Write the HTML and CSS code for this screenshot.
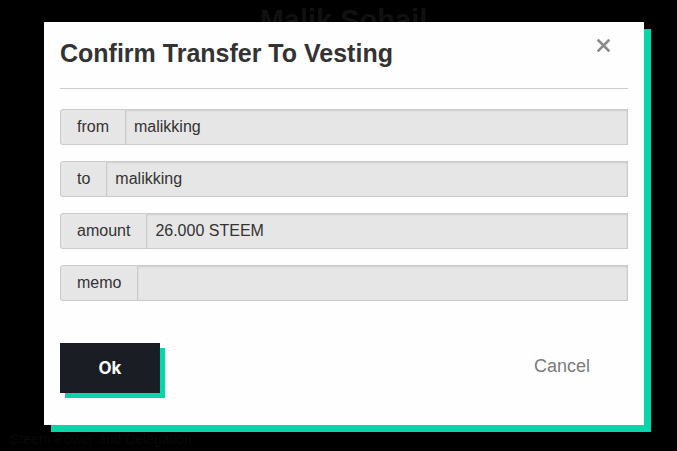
FILE: index.html
```html
<!DOCTYPE html>
<html lang="en">

<head>
    <meta charset="UTF-8">
    <meta name="viewport" content="width=device-width, initial-scale=1.0">
    <title>Confirm Transfer To Vesting</title>
    <link rel="stylesheet" href="styles.css">
</head>

<body>

    <div class="page">
        <h1 class="page-title">Malik Sohail</h1>
        <p class="page-foot">Steem Power and Delegation</p>
    </div>

    <div class="overlay">
        <div class="modal">
            <span class="close-btn">
                <svg width="13" height="13" viewBox="0 0 13 13">
                    <path d="M1.5 1.5 L11.5 11.5 M11.5 1.5 L1.5 11.5" stroke="#8a8a8a" stroke-width="2.6" stroke-linecap="square" fill="none"/>
                </svg>
            </span>

            <h2 class="modal-title">Confirm Transfer To Vesting</h2>
            <hr class="divider">

            <div class="fields">
                <div class="input-group">
                    <span class="group-label">from</span>
                    <span class="group-field">malikking</span>
                </div>
                <div class="input-group">
                    <span class="group-label">to</span>
                    <span class="group-field">malikking</span>
                </div>
                <div class="input-group">
                    <span class="group-label">amount</span>
                    <span class="group-field">26.000 STEEM</span>
                </div>
                <div class="input-group">
                    <span class="group-label">memo</span>
                    <span class="group-field"></span>
                </div>
            </div>

            <div class="actions">
                <button class="ok-btn">Ok</button>
                <button class="cancel-btn">Cancel</button>
            </div>
        </div>
    </div>

</body>

</html>
```

FILE: styles.css
```css
body {
    margin: 0;
    background-color: #000;
    font-family: "Liberation Sans", Arial, sans-serif;
    height: 451px;
    overflow: hidden;
}

.page {
    padding: 4px 0 0 10px;
    text-align: center;
}

.page-title {
    margin: 0;
    font-size: 29px;
    color: #111;
}

.page-foot {
    margin: 394px 0 0 0;
    text-align: left;
    font-size: 14px;
    color: #080808;
}

.overlay {
    position: absolute;
    top: 0;
    left: 0;
    width: 100%;
    height: 100%;
}

.modal {
    position: absolute;
    top: 22px;
    left: 44px;
    width: 600px;
    height: 403px;
    box-sizing: border-box;
    padding: 16px;
    background-color: #fefefe;
    box-shadow: 7px 7px 0 #06d6a9;
}

.close-btn {
    position: absolute;
    top: 17px;
    right: 34px;
    width: 13px;
    height: 13px;
    cursor: pointer;
}

.close-btn svg {
    display: block;
}

.modal-title {
    margin: 0;
    font-size: 25px;
    line-height: 30px;
    font-weight: bold;
    color: #333;
}

.divider {
    margin: 20px 0 0 0;
    border: 0;
    border-top: 1px solid #cacaca;
    height: 0;
}

.fields {
    display: flex;
    flex-direction: column;
    gap: 16px;
    margin-top: 20px;
}

.input-group {
    display: flex;
    height: 36px;
    font-size: 16px;
    color: #333;
}

.group-label {
    display: flex;
    align-items: center;
    padding: 0 16px;
    background-color: #e6e6e6;
    border: 1px solid #cacaca;
    border-radius: 3px 0 0 3px;
}

.group-field {
    flex: 1;
    display: flex;
    align-items: center;
    padding: 0 8px;
    background-color: #e6e6e6;
    border: 1px solid #cacaca;
    border-left: 0;
    box-shadow: inset 0 1px 2px rgba(10, 10, 10, 0.1);
}

.actions {
    display: flex;
    justify-content: space-between;
    align-items: center;
    margin-top: 42px;
}

.ok-btn {
    width: 100px;
    height: 50px;
    border: 0;
    background-color: #1a1e24;
    color: #fff;
    font-family: Inter, sans-serif;
    font-weight: bold;
    font-size: 17px;
    box-shadow: 5px 5px 0 #06d6a9;
    cursor: pointer;
}

.cancel-btn {
    border: 0;
    background: none;
    padding: 0 0 4px 0;
    margin-right: 38px;
    font-family: "Liberation Sans", Arial, sans-serif;
    font-size: 18px;
    color: #7a7a7a;
    cursor: pointer;
}
```
